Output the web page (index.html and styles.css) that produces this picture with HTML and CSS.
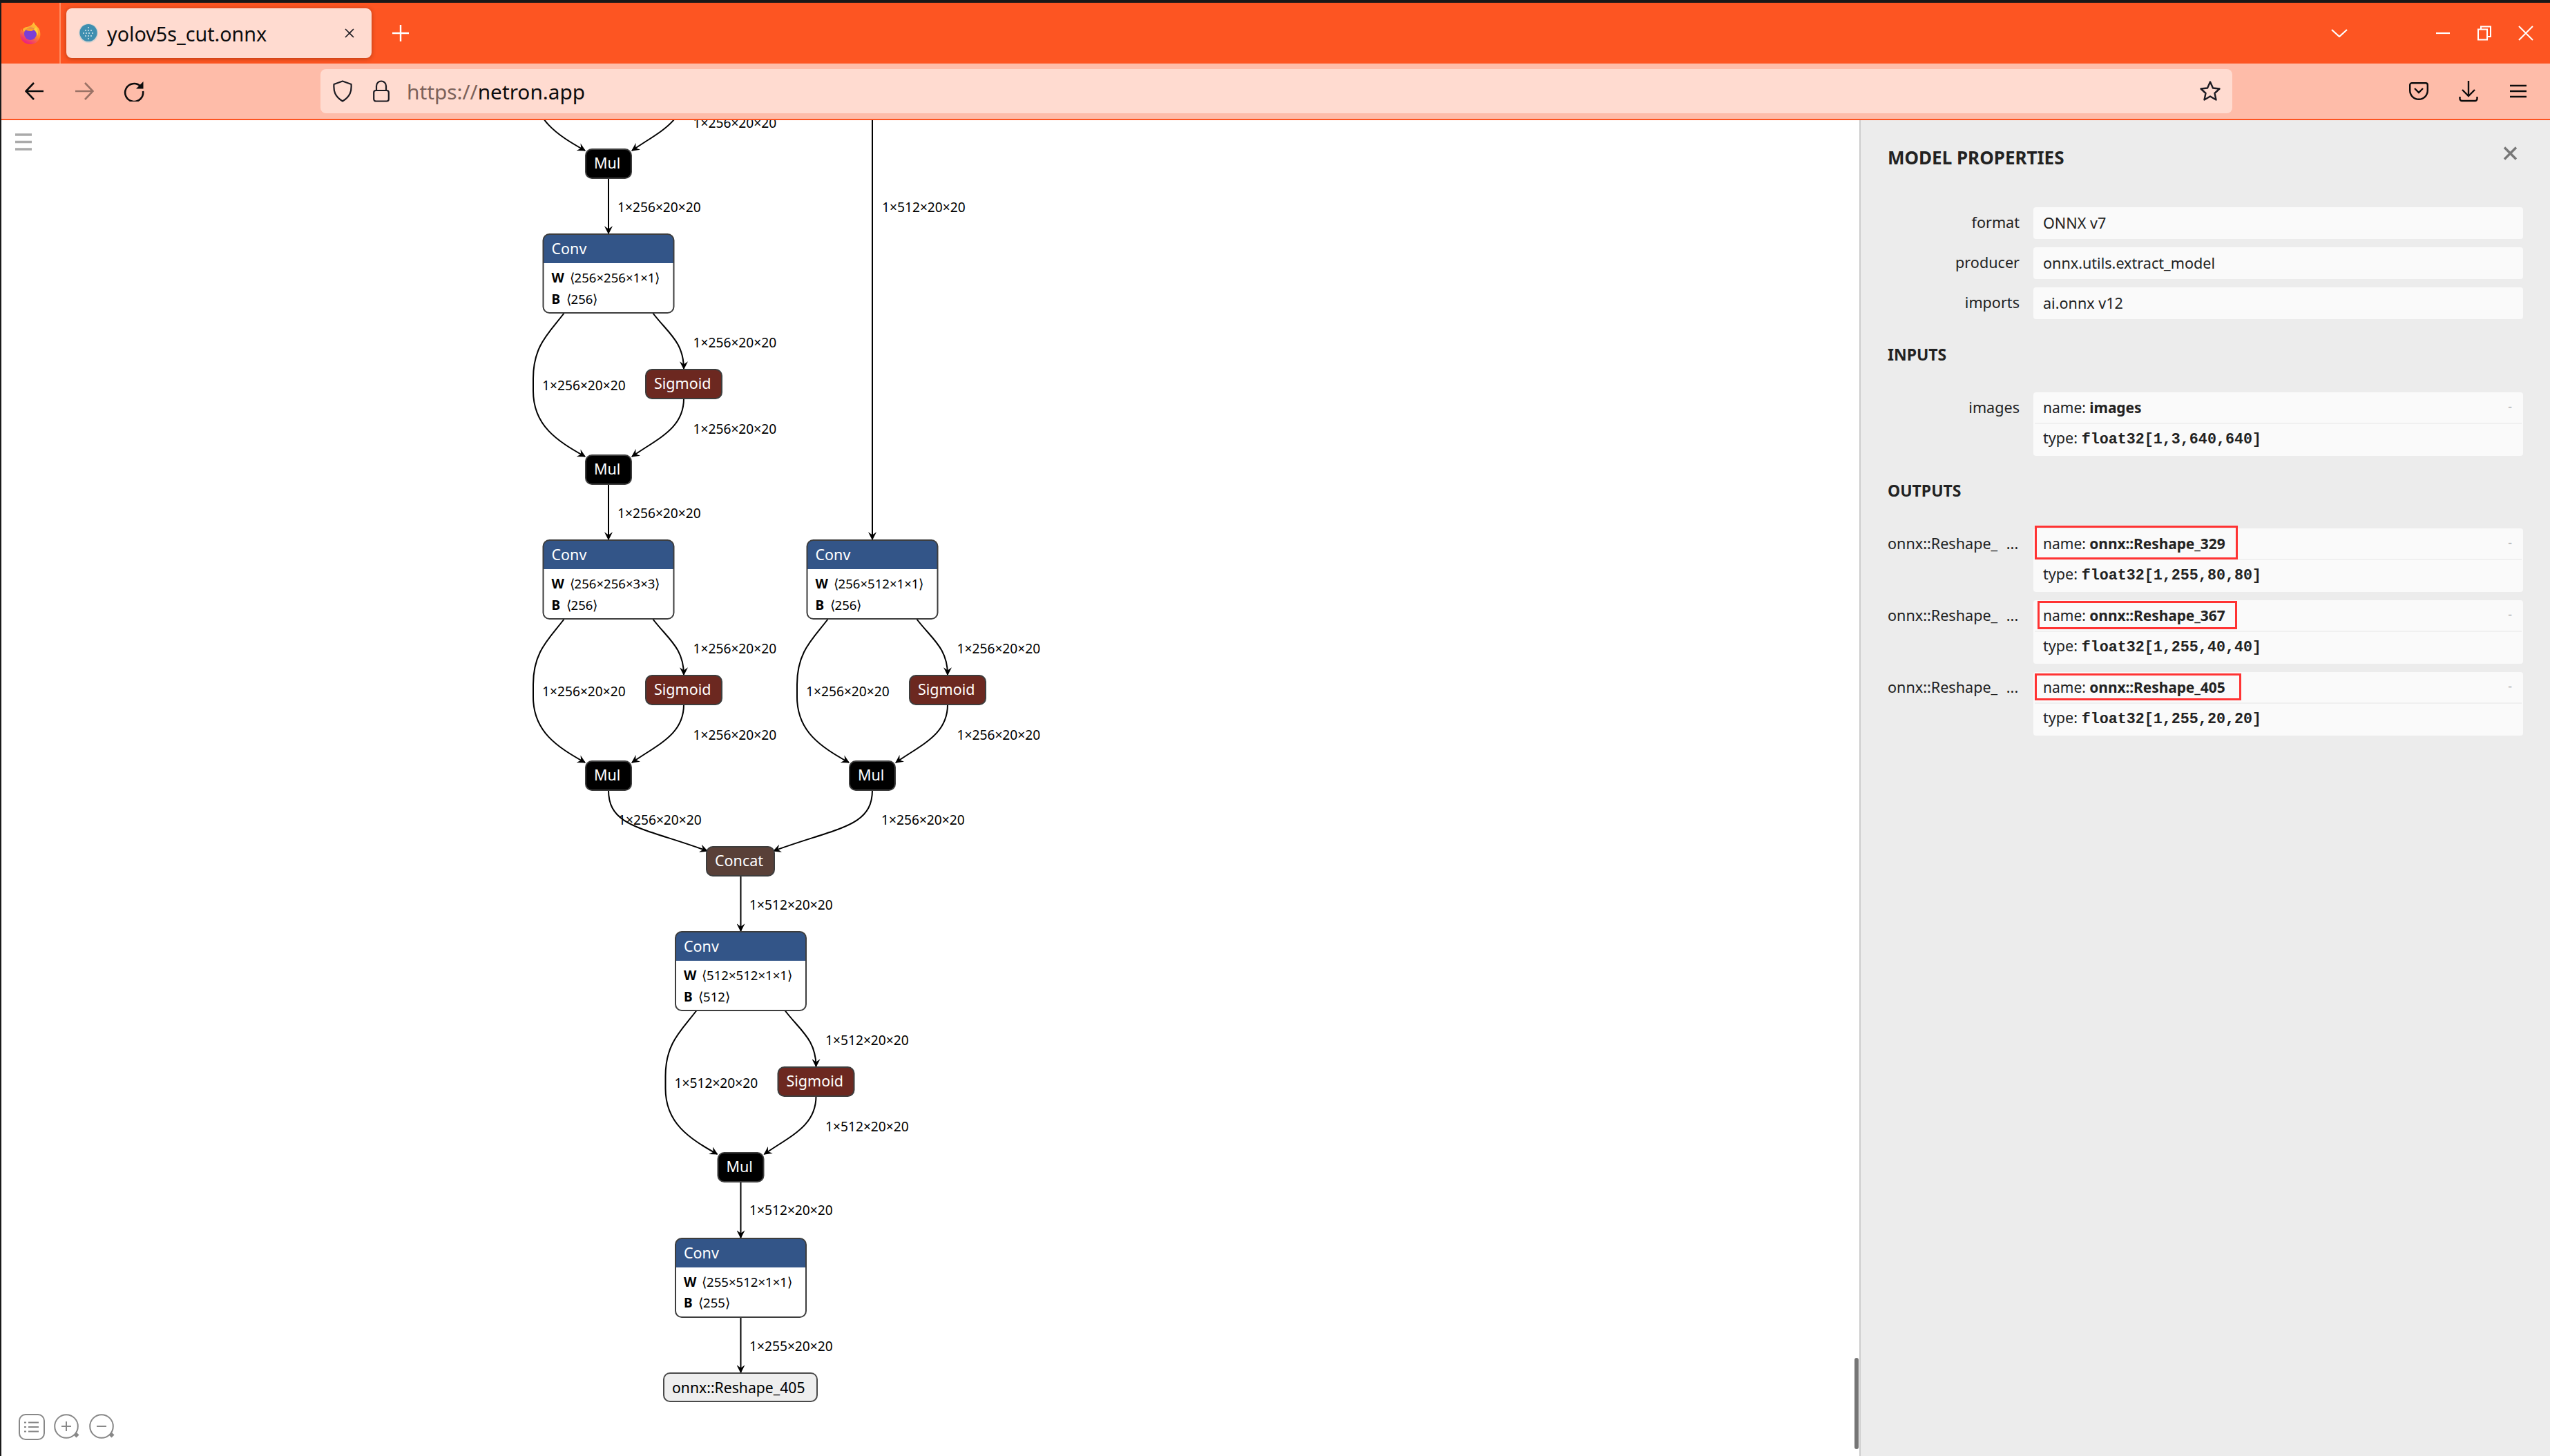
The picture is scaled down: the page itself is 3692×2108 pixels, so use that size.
FILE: index.html
```html
<!DOCTYPE html>
<html lang="en">
<head>
<meta charset="UTF-8">
<title>yolov5s_cut.onnx</title>
<link rel="stylesheet" href="styles.css">
</head>
<body>
<div class="window">

  <div class="tabbar">
    <div class="ff-button">
      <svg width="32" height="34" viewBox="0 0 32 34">
        <defs>
          <linearGradient id="ffOuter" x1="0.8" y1="0" x2="0.3" y2="1">
            <stop offset="0" stop-color="#ffd23a"/>
            <stop offset="0.5" stop-color="#ff8a2a"/>
            <stop offset="1" stop-color="#e8168a"/>
          </linearGradient>
        </defs>
        <path d="M21 1c1 4 4 5 7 9 3 5 3 11 1 15-3 6-8 8-13 8C8 33 1 27 1 18c0-3 1-6 2-8 0 2 1 3 2 4 1-3 4-5 7-6 3-1 7-3 9-7z" fill="url(#ffOuter)"/>
        <path d="M5 11c3-3 7-4 10-3l-2 4c-3 0-5 1-7 3z" fill="#ffb52e"/>
        <circle cx="16" cy="18" r="9" fill="#7a3fd6"/>
        <path d="M9 12c4-4 12-3 15 1-3-1-5 0-6 1-3 0-6 0-9-2z" fill="#ff9a2a"/>
        <path d="M24 8c3 4 4 9 2 13-1-4-2-7-5-9z" fill="#ffcf3a"/>
      </svg>
    </div>
    <div class="tab">
      <svg class="favicon" width="28" height="28" viewBox="0 0 28 28">
        <circle cx="14" cy="14" r="14" fill="#d9d3d0"/>
        <circle cx="14" cy="13.5" r="12.6" fill="#3f8fb0"/>
        <g fill="#d6e6ec">
          <circle cx="14" cy="6" r="1"/><circle cx="10" cy="10" r="1"/><circle cx="14" cy="10" r="1"/><circle cx="18" cy="10" r="1"/>
          <circle cx="7" cy="14" r="1"/><circle cx="11" cy="14" r="1"/><circle cx="15" cy="14" r="1"/><circle cx="20" cy="14" r="1"/>
          <circle cx="10" cy="18" r="1"/><circle cx="14" cy="18" r="1"/><circle cx="18" cy="18" r="1"/><circle cx="14" cy="22" r="1"/>
        </g>
      </svg>
      <span class="tab-title">yolov5s_cut.onnx</span>
      <svg class="tab-close" width="14" height="14" viewBox="0 0 14 14"><path d="M1 1l12 12M13 1L1 13" stroke="#1c1b22" stroke-width="1.6" fill="none"/></svg>
    </div>
    <svg class="new-tab" width="24" height="24" viewBox="0 0 24 24"><path d="M12 0v24M0 12h24" stroke="#fff" stroke-width="2.4"/></svg>
    <svg class="tab-list" width="24" height="12" viewBox="0 0 24 12"><path d="M1 1l11 10L23 1" stroke="#fff" stroke-width="2.2" fill="none"/></svg>
    <div class="win-controls">
      <svg width="22" height="22" viewBox="0 0 22 22"><path d="M1 11h20" stroke="#fff" stroke-width="2.2"/></svg>
      <svg width="22" height="22" viewBox="0 0 22 22"><path d="M2 5.5h13v15H2zM6 5V1.5h14V16h-4.5" stroke="#fff" stroke-width="2" fill="none"/></svg>
      <svg width="22" height="22" viewBox="0 0 22 22"><path d="M1 1l20 20M21 1L1 21" stroke="#fff" stroke-width="2" fill="none"/></svg>
    </div>
  </div>

  <div class="toolbar">
    <div class="tool-btn">
      <svg width="28" height="26" viewBox="0 0 28 26"><path d="M27 13H2M13 1L1.5 13 13 25" stroke="#0c0c0d" stroke-width="2.6" fill="none"/></svg>
    </div>
    <div class="tool-btn">
      <svg width="28" height="26" viewBox="0 0 28 26"><path d="M1 13h25M15 1l11.5 12L15 25" stroke="#9a7266" stroke-width="2.6" fill="none"/></svg>
    </div>
    <div class="tool-btn">
      <svg width="30" height="30" viewBox="0 0 30 30"><path d="M24.5 8A13 13 0 1 0 28 15" stroke="#0c0c0d" stroke-width="2.6" fill="none"/><path d="M28.5 1v10.5H18z" fill="#0c0c0d"/></svg>
    </div>
    <div class="urlbar">
      <svg class="url-shield" width="28" height="32" viewBox="0 0 28 32"><path d="M14 1.5L26.5 6c.8 10-1.5 18-12.5 24.5C3 24 .7 16 1.5 6z" stroke="#1c1b22" stroke-width="2.2" fill="none" stroke-linejoin="round"/></svg>
      <svg class="url-lock" width="24" height="32" viewBox="0 0 24 32"><path d="M5 15V8.500a7 7 0 0 1 14 0V15" stroke="#1c1b22" stroke-width="2.2" fill="none"/><rect x="1.2" y="15" width="21.6" height="15.5" rx="3" stroke="#1c1b22" stroke-width="2.2" fill="none"/></svg>
      <span class="url-text"><span class="url-scheme">https://</span>netron.app</span>
      <svg class="url-star" width="32" height="32" viewBox="0 0 32 32"><path d="M16 2.5l4 9 9.5 1-7 6.500 2 9.500-8.500-5-8.500 5 2-9.500-7-6.500 9.500-1z" stroke="#1c1b22" stroke-width="2.4" fill="none" stroke-linejoin="round"/></svg>
    </div>
    <div class="toolbar-end">
      <div class="tool-btn">
        <svg width="28" height="26" viewBox="0 0 28 26"><path d="M4 1.2h20A2.8 2.8 0 0 1 26.8 4v8a12.8 12.8 0 0 1-25.6 0V4A2.8 2.8 0 0 1 4 1.2z" stroke="#0c0c0d" stroke-width="2.4" fill="none"/><path d="M8 9l6 6 6-6" stroke="#0c0c0d" stroke-width="2.4" fill="none"/></svg>
      </div>
      <div class="tool-btn">
        <svg width="28" height="32" viewBox="0 0 28 32"><path d="M14 1v22M5 14l9 9 9-9" stroke="#0c0c0d" stroke-width="2.4" fill="none"/><path d="M1.5 24v3a3 3 0 0 0 3 3h19a3 3 0 0 0 3-3v-3" stroke="#0c0c0d" stroke-width="2.4" fill="none"/></svg>
      </div>
      <div class="tool-btn">
        <svg width="24" height="20" viewBox="0 0 24 20"><path d="M0 2h24M0 10h24M0 18h24" stroke="#0c0c0d" stroke-width="2.4"/></svg>
      </div>
    </div>
  </div>

  <div class="main">
    <div class="graph">
      <svg class="graph-svg" width="2690" height="1934" viewBox="2 174 2690 1934">
        <defs>
          <marker id="arrow" viewBox="0 0 10 10" refX="9" refY="5" markerWidth="12" markerHeight="12" markerUnits="userSpaceOnUse" orient="auto">
            <path d="M0 0L10 5L0 10L3.5 5z" fill="#000"/>
          </marker>
          <g id="fork">
            <path class="edge" d="M817 453C795 482 772 500 772 548V566C772 616 806 638 847 661"/>
            <path class="edge" d="M945 453C967 482 990 495 990 534"/>
            <path class="edge" d="M990 577C990 620 954 634 915 661"/>
          </g>
          <g id="conv-box">
            <rect class="box-white" width="189" height="114" rx="9"/>
            <path class="fill-conv" d="M0 42V9A9 9 0 0 1 9 0H180A9 9 0 0 1 189 9V42z"/>
            <rect class="box-line" width="189" height="114" rx="9"/>
          </g>
          <rect id="mul-box" class="fill-mul" width="66" height="42" rx="9"/>
          <rect id="sig-box" class="fill-sig" width="110" height="42" rx="9"/>
        </defs>

        <!-- edges -->
        <use href="#fork" y="-443"/>
        <use href="#fork"/>
        <use href="#fork" y="443"/>
        <use href="#fork" x="382" y="443"/>
        <use href="#fork" x="191.5" y="1010"/>
        <path class="edge" d="M881 258V338"/>
        <path class="edge" d="M881 701V781"/>
        <path class="edge" d="M1263 174V781"/>
        <path class="edge" d="M881 1144C881 1198 932 1198 1024 1232"/>
        <path class="edge" d="M1263 1144C1263 1198 1212 1198 1120 1232"/>
        <path class="edge" d="M1072.5 1268V1348"/>
        <path class="edge" d="M1072.5 1711V1792"/>
        <path class="edge" d="M1072.5 1906V1987"/>

        <!-- edge labels -->
        <text class="lbl" x="1003.5" y="185">1×256×20×20</text>
        <text class="lbl" x="894" y="307">1×256×20×20</text>
        <text class="lbl" x="1277" y="307">1×512×20×20</text>
        <text class="lbl" x="1003.5" y="503">1×256×20×20</text>
        <text class="lbl" x="785" y="565">1×256×20×20</text>
        <text class="lbl" x="1003.5" y="628">1×256×20×20</text>
        <text class="lbl" x="894" y="750">1×256×20×20</text>
        <text class="lbl" x="1003.5" y="946">1×256×20×20</text>
        <text class="lbl" x="785" y="1008">1×256×20×20</text>
        <text class="lbl" x="1003.5" y="1071">1×256×20×20</text>
        <text class="lbl" x="1385.5" y="946">1×256×20×20</text>
        <text class="lbl" x="1167" y="1008">1×256×20×20</text>
        <text class="lbl" x="1385.5" y="1071">1×256×20×20</text>
        <text class="lbl" x="895" y="1194">1×256×20×20</text>
        <text class="lbl" x="1276" y="1194">1×256×20×20</text>
        <text class="lbl" x="1085" y="1317">1×512×20×20</text>
        <text class="lbl" x="1195" y="1513">1×512×20×20</text>
        <text class="lbl" x="976.5" y="1575">1×512×20×20</text>
        <text class="lbl" x="1195" y="1638">1×512×20×20</text>
        <text class="lbl" x="1085" y="1759">1×512×20×20</text>
        <text class="lbl" x="1085" y="1956">1×255×20×20</text>

        <!-- nodes -->
        <g transform="translate(848 216)"><use href="#mul-box"/><text class="op" x="12" y="28">Mul</text></g>

        <g transform="translate(786.5 339)"><use href="#conv-box"/>
          <text class="op" x="12" y="29">Conv</text>
          <text class="attr-key" x="12" y="70">W</text><text class="attr" x="38" y="70">⟨256×256×1×1⟩</text>
          <text class="attr-key" x="12" y="101">B</text><text class="attr" x="33" y="101">⟨256⟩</text>
        </g>
        <g transform="translate(935 535)"><use href="#sig-box"/><text class="op" x="12" y="28">Sigmoid</text></g>
        <g transform="translate(848 659)"><use href="#mul-box"/><text class="op" x="12" y="28">Mul</text></g>

        <g transform="translate(786.5 782)"><use href="#conv-box"/>
          <text class="op" x="12" y="29">Conv</text>
          <text class="attr-key" x="12" y="70">W</text><text class="attr" x="38" y="70">⟨256×256×3×3⟩</text>
          <text class="attr-key" x="12" y="101">B</text><text class="attr" x="33" y="101">⟨256⟩</text>
        </g>
        <g transform="translate(935 978)"><use href="#sig-box"/><text class="op" x="12" y="28">Sigmoid</text></g>
        <g transform="translate(848 1102)"><use href="#mul-box"/><text class="op" x="12" y="28">Mul</text></g>

        <g transform="translate(1168.5 782)"><use href="#conv-box"/>
          <text class="op" x="12" y="29">Conv</text>
          <text class="attr-key" x="12" y="70">W</text><text class="attr" x="38" y="70">⟨256×512×1×1⟩</text>
          <text class="attr-key" x="12" y="101">B</text><text class="attr" x="33" y="101">⟨256⟩</text>
        </g>
        <g transform="translate(1317 978)"><use href="#sig-box"/><text class="op" x="12" y="28">Sigmoid</text></g>
        <g transform="translate(1230 1102)"><use href="#mul-box"/><text class="op" x="12" y="28">Mul</text></g>

        <g transform="translate(1023 1226)"><rect class="fill-concat" width="98" height="42" rx="9"/><text class="op" x="12" y="28">Concat</text></g>

        <g transform="translate(978 1349)"><use href="#conv-box"/>
          <text class="op" x="12" y="29">Conv</text>
          <text class="attr-key" x="12" y="70">W</text><text class="attr" x="38" y="70">⟨512×512×1×1⟩</text>
          <text class="attr-key" x="12" y="101">B</text><text class="attr" x="33" y="101">⟨512⟩</text>
        </g>
        <g transform="translate(1126.5 1545)"><use href="#sig-box"/><text class="op" x="12" y="28">Sigmoid</text></g>
        <g transform="translate(1039.5 1669)"><use href="#mul-box"/><text class="op" x="12" y="28">Mul</text></g>

        <g transform="translate(978 1793)"><use href="#conv-box"/>
          <text class="op" x="12" y="29">Conv</text>
          <text class="attr-key" x="12" y="70">W</text><text class="attr" x="38" y="70">⟨255×512×1×1⟩</text>
          <text class="attr-key" x="12" y="100">B</text><text class="attr" x="33" y="100">⟨255⟩</text>
        </g>

        <g transform="translate(961 1988)"><rect class="fill-out" width="222" height="41" rx="9"/><text class="out" x="12" y="29">onnx::Reshape_405</text></g>
      </svg>

      <svg class="menu-icon" width="24" height="25" viewBox="0 0 24 25"><path d="M0 2h24M0 12.5h24M0 23h24" stroke="#aaa" stroke-width="3.4"/></svg>
      <div class="graph-tools">
        <svg width="38" height="38" viewBox="0 0 38 38"><rect x="1" y="1" width="36" height="36" rx="9" stroke="#888" stroke-width="2" fill="none"/><path d="M8 12.5h3M14 12.5h15M8 19h3M14 19h15M8 25.5h3M14 25.5h15" stroke="#888" stroke-width="2"/></svg>
        <svg width="38" height="38" viewBox="0 0 38 38"><circle cx="18" cy="18" r="16.8" stroke="#888" stroke-width="2" fill="none"/><path d="M18 11v14M11 18h14" stroke="#888" stroke-width="2"/><path d="M29 31l4-4 3.5 3.5-4 4z" fill="#888"/></svg>
        <svg width="38" height="38" viewBox="0 0 38 38"><circle cx="18" cy="18" r="16.8" stroke="#888" stroke-width="2" fill="none"/><path d="M11 18h14" stroke="#888" stroke-width="2"/><path d="M29 31l4-4 3.5 3.5-4 4z" fill="#888"/></svg>
      </div>
      <div class="scroll-thumb"></div>
    </div>

    <aside class="sidebar">
      <div class="side-head">
        <span class="side-title">MODEL PROPERTIES</span>
        <svg class="side-close" width="21" height="20" viewBox="0 0 21 20"><path d="M2 1.5l17 17M19 1.5l-17 17" stroke="#777" stroke-width="3.4" fill="none"/></svg>
      </div>

      <div class="prop">
        <div class="prop-name">format</div>
        <div class="prop-box"><div class="prop-line">ONNX v7</div></div>
      </div>
      <div class="prop">
        <div class="prop-name">producer</div>
        <div class="prop-box"><div class="prop-line">onnx.utils.extract_model</div></div>
      </div>
      <div class="prop">
        <div class="prop-name">imports</div>
        <div class="prop-box"><div class="prop-line">ai.onnx v12</div></div>
      </div>

      <h4 class="section-title">INPUTS</h4>
      <div class="prop">
        <div class="prop-name">images</div>
        <div class="prop-box">
          <div class="prop-line line-name">name: <b>images</b><span class="expander">-</span></div>
          <div class="prop-line line-type">type: <code>float32[1,3,640,640]</code></div>
        </div>
      </div>

      <h4 class="section-title section-outputs">OUTPUTS</h4>
      <div class="prop">
        <div class="prop-name name-cut">onnx::Reshape_ ...</div>
        <div class="prop-box">
          <div class="prop-line line-name">name: <b>onnx::Reshape_329</b><span class="expander">-</span></div>
          <div class="prop-line line-type">type: <code>float32[1,255,80,80]</code></div>
          <div class="mark mark-a"></div>
        </div>
      </div>
      <div class="prop">
        <div class="prop-name name-cut">onnx::Reshape_ ...</div>
        <div class="prop-box">
          <div class="prop-line line-name">name: <b>onnx::Reshape_367</b><span class="expander">-</span></div>
          <div class="prop-line line-type">type: <code>float32[1,255,40,40]</code></div>
          <div class="mark mark-b"></div>
        </div>
      </div>
      <div class="prop">
        <div class="prop-name name-cut">onnx::Reshape_ ...</div>
        <div class="prop-box">
          <div class="prop-line line-name">name: <b>onnx::Reshape_405</b><span class="expander">-</span></div>
          <div class="prop-line line-type">type: <code>float32[1,255,20,20]</code></div>
          <div class="mark mark-c"></div>
        </div>
      </div>
    </aside>
  </div>
</div>
</body>
</html>
```
FILE: styles.css
```css
html,body{margin:0;padding:0;height:100%;}
body{font-family:"Noto Sans",Arial,sans-serif;color:#1c1b22;background:#fff;overflow:hidden;}
svg{display:block;flex:none;}
.window{height:100vh;box-sizing:border-box;border-top:4px solid #181818;border-left:2px solid #1a1a1a;display:flex;flex-direction:column;}

/* tab strip */
.tabbar{height:88px;flex:none;background:#fd5522;display:flex;align-items:center;}
.ff-button{width:84px;height:88px;border-right:2px solid #ff8c62;display:flex;align-items:center;justify-content:center;}
.tab{width:442px;height:72px;margin:8px 0 0 8px;align-self:flex-start;background:#ffdbd0;border-radius:8px;box-shadow:0 1px 6px rgba(90,30,0,.45);display:flex;align-items:center;}
.favicon{margin-left:18px;}
.tab-title{margin-left:13px;font-size:28.7px;color:#0c0c0d;flex:1;white-space:nowrap;}
.tab-close{margin-right:25px;}
.new-tab{margin-left:30px;}
.tab-list{margin-left:auto;}
.win-controls{margin-left:127px;margin-right:24px;display:flex;gap:38px;}

/* nav bar */
.toolbar{height:80px;flex:none;background:#febca9;border-bottom:2px solid #fd5522;display:flex;align-items:center;padding-left:12px;padding-right:10px;}
.tool-btn{width:72px;display:flex;justify-content:center;align-items:center;}
.urlbar{flex:1;height:64px;margin-left:234px;background:#ffdbd0;border-radius:8px;display:flex;align-items:center;}
.url-shield{margin-left:18px;}
.url-lock{margin-left:30px;}
.url-text{margin-left:25px;font-size:29.8px;color:#0c0c0d;flex:1;}
.url-scheme{color:#7c625a;}
.url-star{margin-right:16px;}
.toolbar-end{margin-left:234px;display:flex;}

/* graph */
.main{flex:1;display:flex;min-height:0;}
.graph{flex:1;position:relative;overflow:hidden;background:#fff;}
.edge{fill:none;stroke:#000;stroke-width:2;marker-end:url(#arrow);}
.lbl{font-size:19.2px;fill:#000;}
.op{font-size:21.5px;fill:#fff;}
.out{font-size:21.2px;fill:#000;}
.attr-key{font-size:19px;font-weight:bold;fill:#000;}
.attr{font-size:18.6px;fill:#000;}
.box-white{fill:#fff;}
.box-line{fill:none;stroke:#3d3d3d;stroke-width:2;}
.fill-conv{fill:#335588;}
.fill-mul{fill:#000;stroke:#3d3d3d;stroke-width:2;}
.fill-sig{fill:#6c2820;stroke:#3d3d3d;stroke-width:2;}
.fill-concat{fill:#594038;stroke:#3d3d3d;stroke-width:2;}
.fill-out{fill:#eee;stroke:#4a4a4a;stroke-width:2;}
.menu-icon{position:absolute;left:20px;top:19px;}
.graph-tools{position:absolute;left:25px;bottom:23px;display:flex;gap:13px;}
.scroll-thumb{position:absolute;right:1px;top:1792px;width:6px;height:132px;border-radius:3px;background:#757575;}

/* properties panel */
.sidebar{width:920px;flex:none;border-left:2px solid #ccc;background:#ececec;padding:39px 39px 0 39px;font-size:21.6px;color:#222;}
.side-head{height:30px;margin-bottom:57px;display:flex;align-items:center;justify-content:space-between;margin-right:8px;}
.side-title{font-size:26px;font-weight:bold;color:#222;line-height:30px;}
.side-close{margin-top:-12px;}
.prop{display:flex;gap:20px;margin-bottom:12px;}
.prop-name{width:191px;flex:none;text-align:right;line-height:43px;white-space:nowrap;}
.name-cut{text-align:left;word-spacing:7px;}
.prop-box{flex:1;position:relative;background:#fafafa;border-radius:4px;}
.prop-line{line-height:45px;height:46px;padding-left:14px;position:relative;}
.line-name{height:44px;border-bottom:2px solid #f0f0f0;margin:0 2px;padding-left:12px;font-size:21px;}
.line-name b{letter-spacing:-.1px;}
.line-type{line-height:40px;}
.prop-line code{font-family:"Liberation Mono",monospace;font-weight:bold;font-size:21.7px;}
.expander{position:absolute;right:14px;top:-2px;color:#aaa;font-size:18px;}
.section-title{font-size:23px;font-weight:bold;color:#222;height:30px;line-height:27px;margin:38px 0;}
.section-outputs{margin-top:37px;}
.mark{position:absolute;box-sizing:border-box;border:3px solid #f33;}
.mark-a{left:2px;top:-4px;width:294px;height:49px;}
.mark-b{left:6px;top:1px;width:289px;height:41px;}
.mark-c{left:2px;top:2px;width:299px;height:39px;}
```
